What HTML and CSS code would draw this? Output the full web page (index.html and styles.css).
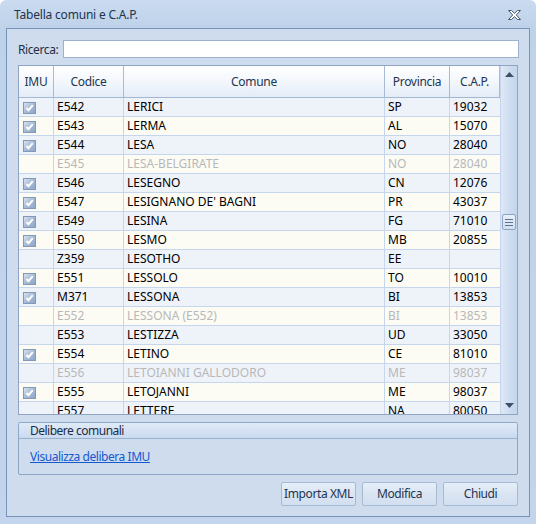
FILE: index.html
```html
<!DOCTYPE html>
<html>
<head>
<meta charset="utf-8">
<link rel="stylesheet" href="styles.css">
</head>
<body>
<div class="win">
  <div class="titlebar">
    <span class="title">Tabella comuni e C.A.P.</span>
    <svg class="close" width="13" height="10" viewBox="0 0 13 10"><polygon points="0.5,0.5 3.5,0.5 6.5,3.3 9.5,0.5 12.5,0.5 8.3,5 12.5,9.5 9.5,9.5 6.5,6.7 3.5,9.5 0.5,9.5 4.7,5" fill="#fff" stroke="#4b5669" stroke-width="1" stroke-linejoin="round"/></svg>
  </div>
  <div class="content">
    <div class="search">
      <span class="lbl">Ricerca:</span>
      <div class="input"></div>
    </div>
    <div class="grid">
      <div class="table">
        <div class="row head">
          <div class="c imu">IMU</div><div class="c cod">Codice</div><div class="c com">Comune</div><div class="c prov">Provincia</div><div class="c cap">C.A.P.</div>
        </div>
        <div class="row odd"><div class="c imu"><span class="chk"><svg width="11" height="10" viewBox="0 0 11 10"><polyline points="2.5,5 4.5,7.2 8.8,2.2" fill="none" stroke="#fff" stroke-width="2"/></svg></span></div><div class="c cod">E542</div><div class="c com">LERICI</div><div class="c prov">SP</div><div class="c cap">19032</div></div>
        <div class="row even"><div class="c imu"><span class="chk"><svg width="11" height="10" viewBox="0 0 11 10"><polyline points="2.5,5 4.5,7.2 8.8,2.2" fill="none" stroke="#fff" stroke-width="2"/></svg></span></div><div class="c cod">E543</div><div class="c com">LERMA</div><div class="c prov">AL</div><div class="c cap">15070</div></div>
        <div class="row odd"><div class="c imu"><span class="chk"><svg width="11" height="10" viewBox="0 0 11 10"><polyline points="2.5,5 4.5,7.2 8.8,2.2" fill="none" stroke="#fff" stroke-width="2"/></svg></span></div><div class="c cod">E544</div><div class="c com">LESA</div><div class="c prov">NO</div><div class="c cap">28040</div></div>
        <div class="row even dis"><div class="c imu"></div><div class="c cod">E545</div><div class="c com">LESA-BELGIRATE</div><div class="c prov">NO</div><div class="c cap">28040</div></div>
        <div class="row odd"><div class="c imu"><span class="chk"><svg width="11" height="10" viewBox="0 0 11 10"><polyline points="2.5,5 4.5,7.2 8.8,2.2" fill="none" stroke="#fff" stroke-width="2"/></svg></span></div><div class="c cod">E546</div><div class="c com">LESEGNO</div><div class="c prov">CN</div><div class="c cap">12076</div></div>
        <div class="row even"><div class="c imu"><span class="chk"><svg width="11" height="10" viewBox="0 0 11 10"><polyline points="2.5,5 4.5,7.2 8.8,2.2" fill="none" stroke="#fff" stroke-width="2"/></svg></span></div><div class="c cod">E547</div><div class="c com">LESIGNANO DE' BAGNI</div><div class="c prov">PR</div><div class="c cap">43037</div></div>
        <div class="row odd"><div class="c imu"><span class="chk"><svg width="11" height="10" viewBox="0 0 11 10"><polyline points="2.5,5 4.5,7.2 8.8,2.2" fill="none" stroke="#fff" stroke-width="2"/></svg></span></div><div class="c cod">E549</div><div class="c com">LESINA</div><div class="c prov">FG</div><div class="c cap">71010</div></div>
        <div class="row even"><div class="c imu"><span class="chk"><svg width="11" height="10" viewBox="0 0 11 10"><polyline points="2.5,5 4.5,7.2 8.8,2.2" fill="none" stroke="#fff" stroke-width="2"/></svg></span></div><div class="c cod">E550</div><div class="c com">LESMO</div><div class="c prov">MB</div><div class="c cap">20855</div></div>
        <div class="row odd"><div class="c imu"></div><div class="c cod">Z359</div><div class="c com">LESOTHO</div><div class="c prov">EE</div><div class="c cap"></div></div>
        <div class="row even"><div class="c imu"><span class="chk"><svg width="11" height="10" viewBox="0 0 11 10"><polyline points="2.5,5 4.5,7.2 8.8,2.2" fill="none" stroke="#fff" stroke-width="2"/></svg></span></div><div class="c cod">E551</div><div class="c com">LESSOLO</div><div class="c prov">TO</div><div class="c cap">10010</div></div>
        <div class="row odd"><div class="c imu"><span class="chk"><svg width="11" height="10" viewBox="0 0 11 10"><polyline points="2.5,5 4.5,7.2 8.8,2.2" fill="none" stroke="#fff" stroke-width="2"/></svg></span></div><div class="c cod">M371</div><div class="c com">LESSONA</div><div class="c prov">BI</div><div class="c cap">13853</div></div>
        <div class="row even dis"><div class="c imu"></div><div class="c cod">E552</div><div class="c com">LESSONA (E552)</div><div class="c prov">BI</div><div class="c cap">13853</div></div>
        <div class="row odd"><div class="c imu"></div><div class="c cod">E553</div><div class="c com">LESTIZZA</div><div class="c prov">UD</div><div class="c cap">33050</div></div>
        <div class="row even"><div class="c imu"><span class="chk"><svg width="11" height="10" viewBox="0 0 11 10"><polyline points="2.5,5 4.5,7.2 8.8,2.2" fill="none" stroke="#fff" stroke-width="2"/></svg></span></div><div class="c cod">E554</div><div class="c com">LETINO</div><div class="c prov">CE</div><div class="c cap">81010</div></div>
        <div class="row odd dis"><div class="c imu"></div><div class="c cod">E556</div><div class="c com">LETOIANNI GALLODORO</div><div class="c prov">ME</div><div class="c cap">98037</div></div>
        <div class="row even"><div class="c imu"><span class="chk"><svg width="11" height="10" viewBox="0 0 11 10"><polyline points="2.5,5 4.5,7.2 8.8,2.2" fill="none" stroke="#fff" stroke-width="2"/></svg></span></div><div class="c cod">E555</div><div class="c com">LETOJANNI</div><div class="c prov">ME</div><div class="c cap">98037</div></div>
        <div class="row odd"><div class="c imu"></div><div class="c cod">E557</div><div class="c com">LETTERE</div><div class="c prov">NA</div><div class="c cap">80050</div></div>
      </div>
      <div class="vscroll">
        <div class="arrow"><svg width="9" height="5" viewBox="0 0 9 5"><polygon points="0,5 9,5 4.5,0" fill="#3e4f68"/></svg></div>
        <div class="track"><div class="thumb"><i></i><i></i><i></i></div></div>
        <div class="arrow"><svg width="9" height="5" viewBox="0 0 9 5"><polygon points="0,0 9,0 4.5,5" fill="#3e4f68"/></svg></div>
      </div>
    </div>
    <div class="group">
      <div class="ghead">Delibere comunali</div>
      <div class="gbody"><a class="link" href="#">Visualizza delibera IMU</a></div>
    </div>
    <div class="buttons">
      <div class="btn">Importa XML</div>
      <div class="btn">Modifica</div>
      <div class="btn">Chiudi</div>
    </div>
  </div>
</div>
</body>
</html>
```
FILE: styles.css
```css
* { box-sizing: border-box; }
html, body { margin: 0; padding: 0; }
body {
  font-family: "Noto Sans", "Open Sans", sans-serif;
  font-size: 12px;
  background: #fff;
}
.win {
  width: 536px;
  height: 524px;
  background: linear-gradient(#cadbf0, #bed2ea 28px, #c3d5ec);
  border-radius: 6px 6px 0 0;
  display: flex;
  flex-direction: column;
}
.titlebar {
  height: 28px;
  display: flex;
  align-items: center;
  justify-content: space-between;
  padding: 1px 15px 0 14px;
  color: #22344c;
}
.title { letter-spacing: -0.2px; }
.close { display: block; margin-top: 1px; }
.content {
  margin: 0 6px 7px;
  flex: 1;
  border: 1px solid #7893b8;
  background: #cfdcee;
  padding: 11px 11px 10px;
  display: flex;
  flex-direction: column;
}
.search {
  display: flex;
  align-items: center;
  height: 18px;
}
.lbl {
  width: 45px;
  color: #1f2e44;
  letter-spacing: -0.4px;
}
.input {
  flex: 1;
  height: 18px;
  background: #fff;
  border: 1px solid #9bb1cd;
  margin-right: -1px;
}
.grid {
  margin-top: 7px;
  height: 350px;
  border: 1px solid #8ea4c2;
  display: flex;
  background: #fff;
}
.table {
  width: 481px;
  overflow: hidden;
}
.row {
  display: flex;
  height: 19px;
  border-bottom: 1px solid #c6d7ed;
  line-height: 18px;
}
.row.odd { background: #eef3fa; }
.row.even { background: #fdfcf4; }
.row.dis { color: #b8b8b8; }
.c {
  border-right: 1px solid #c6d7ed;
  padding-left: 3px;
  white-space: nowrap;
  overflow: hidden;
}
.imu { width: 35px; padding-left: 4px; }
.cod { width: 70px; }
.com { width: 261px; }
.prov { width: 65px; }
.cap { width: 50px; border-right: none; }
.row.head {
  height: 32px;
  line-height: 31px;
  background: linear-gradient(#ffffff, #f3f7fc 50%, #e4ecf7);
  border-bottom: 1px solid #a3b8d2;
  color: #1e344f;
  letter-spacing: -0.3px;
}
.row.head .c {
  text-align: center;
  padding-left: 0;
  border-right-color: #a7bbd4;
}
.row.head .cap { border-right: 1px solid #a7bbd4; }
.chk {
  display: inline-block;
  width: 13px;
  height: 12px;
  margin-top: 4px;
  vertical-align: top;
  border: 1px solid #8399b9;
  background: linear-gradient(135deg, #d8e2ef, #a3b8d4 55%, #8fa7c8);
}
.chk svg { display: block; }
.vscroll {
  width: 17px;
  display: flex;
  flex-direction: column;
  background: linear-gradient(to right, #dfe8f5, #ccdbef 60%, #c4d5ec);
  border-left: 1px solid #c4d4ea;
}
.arrow {
  height: 17px;
  display: flex;
  align-items: center;
  justify-content: center;
}
.arrow svg { display: block; }
.track {
  flex: 1;
  padding-top: 131px;
  padding-left: 1px;
}
.thumb {
  width: 14px;
  height: 16px;
  border: 1px solid #8ba3c4;
  border-radius: 2px;
  background: linear-gradient(#e9f0f9, #d2dff0);
  display: flex;
  flex-direction: column;
  align-items: center;
  justify-content: center;
  gap: 2px;
}
.thumb i {
  display: block;
  width: 8px;
  height: 1px;
  background: #5d7295;
}
.group {
  margin-top: 7px;
  height: 53px;
  border: 1px solid #8ea6c7;
  border-radius: 2px;
  display: flex;
  flex-direction: column;
}
.ghead {
  height: 16px;
  line-height: 15px;
  padding-left: 11px;
  background: linear-gradient(#e1ebf7, #c9daf0);
  border-bottom: 1px solid #9ab2d2;
  color: #1b2b42;
  letter-spacing: -0.5px;
}
.gbody {
  flex: 1;
  padding: 9px 11px 0;
}
.link {
  color: #1559d0;
  text-decoration: underline;
  letter-spacing: -0.45px;
}
.buttons {
  margin-top: 7px;
  display: flex;
  justify-content: flex-end;
  gap: 6px;
}
.btn {
  width: 75px;
  height: 24px;
  line-height: 22px;
  text-align: center;
  white-space: nowrap;
  border: 1px solid #a7bad4;
  border-radius: 2px;
  background: linear-gradient(#e6eef9, #dae5f3 50%, #d2dff0);
  color: #1e344f;
  letter-spacing: -0.4px;
}
```
